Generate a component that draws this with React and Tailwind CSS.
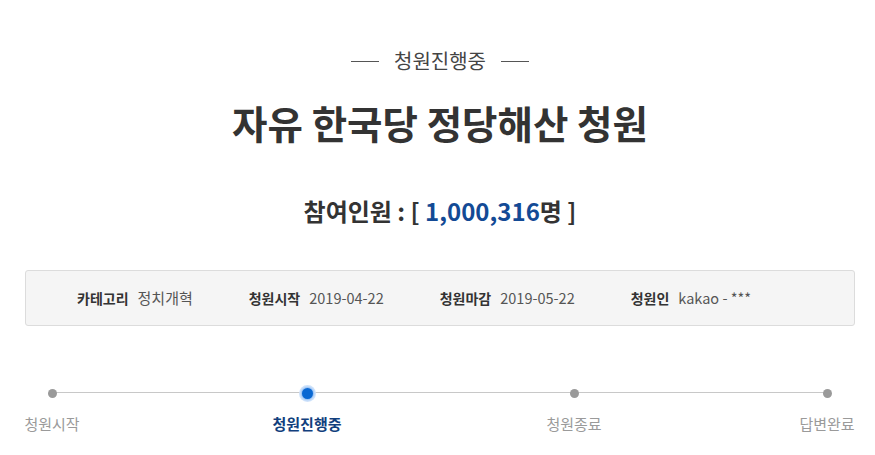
const info = [
  { label: '카테고리', value: '정치개혁', size: 'text-[15px]' },
  { label: '청원시작', value: '2019-04-22', size: 'text-[14.5px]' },
  { label: '청원마감', value: '2019-05-22', size: 'text-[14.5px]' },
  { label: '청원인', value: 'kakao - ***', size: 'text-[14.5px]' },
]

// gaps between the step columns, measured off the reference
const steps = [
  { label: '청원시작', active: false, gap: 'ml-0' },
  { label: '청원진행중', active: true, gap: 'ml-[201px]' },
  { label: '청원종료', active: false, gap: 'ml-[213px]' },
  { label: '답변완료', active: false, gap: 'ml-[199px]' },
]

function Step({ step }) {
  return (
    <div className={`w-[54px] flex flex-col items-center ${step.gap}`}>
      <div className="h-[16px] flex items-center justify-center">
        {step.active ? (
          <div className="w-[17px] h-[17px] rounded-full bg-[#d3e5fb] flex items-center justify-center">
            <div className="w-[11px] h-[11px] rounded-full bg-[#0a68d2] shadow-[0_0_2px_1px_rgba(80,150,235,0.6)]" />
          </div>
        ) : (
          <div className="w-[9px] h-[9px] rounded-full bg-[#9a9a9a]" />
        )}
      </div>
      <div className={`mt-[15px] text-[15px] leading-none whitespace-nowrap ${step.active ? 'font-bold text-[#123f7d]' : 'text-[#9a9a9a]'}`}>
        {step.label}
      </div>
    </div>
  )
}

export default function App() {
  return (
    <div className="w-[875px] h-[455px] bg-white pl-[25px] pr-[20px] font-['Noto_Sans_CJK_KR',sans-serif] overflow-hidden">
      <div className="flex items-center justify-center gap-[15px] pt-[49px]">
        <div className="w-[28px] h-px bg-[#555]" />
        <span className="text-[20px] leading-[24px] text-[#444]">청원진행중</span>
        <div className="w-[28px] h-px bg-[#555]" />
      </div>

      <h1 className="mt-[25px] text-center text-[38.5px] leading-[48px] font-bold text-[#333]">
        자유 한국당 정당해산 청원
      </h1>

      <div className="mt-[50px] text-center text-[24px] leading-[30px] font-bold text-[#333]">
        참여인원 : [ <span className="text-[#134a95]">1,000,316</span>명 ]
      </div>

      <div className="mt-[44px] h-[56px] bg-[#f5f5f5] border border-[#dcdcdc] rounded-[3px] flex items-center pl-[51px] gap-[56px]">
        {info.map((item) => (
          <div key={item.label} className="flex items-center gap-[9px]">
            <span className="text-[14px] font-bold text-[#333]">{item.label}</span>
            <span className={`${item.size} text-[#555]`}>{item.value}</span>
          </div>
        ))}
      </div>

      <div className="relative mt-[59px]">
        <div className="absolute left-[27px] right-[27px] top-[7px] h-px bg-[#c8c8c8]" />
        <div className="relative flex">
          {steps.map((step) => (
            <Step key={step.label} step={step} />
          ))}
        </div>
      </div>
    </div>
  )
}
